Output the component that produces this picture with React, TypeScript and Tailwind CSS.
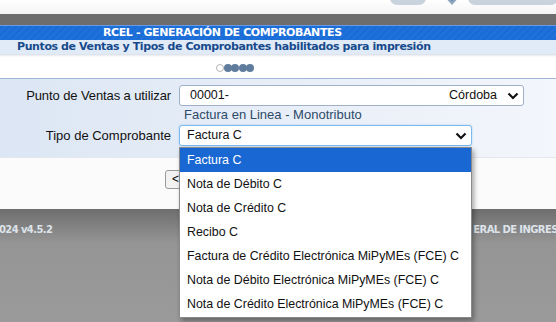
import React from "react"

const opciones = [
  "Factura C",
  "Nota de Débito C",
  "Nota de Crédito C",
  "Recibo C",
  "Factura de Crédito Electrónica MiPyMEs (FCE) C",
  "Nota de Débito Electrónica MiPyMEs (FCE) C",
  "Nota de Crédito Electrónica MiPyMEs (FCE) C",
]

function Chevron() {
  return (
    <svg width="12" height="8" viewBox="0 0 12 8" className="shrink-0">
      <path d="M1.5 1.5 L6 6 L10.5 1.5" fill="none" stroke="#111" strokeWidth="2.2" />
    </svg>
  )
}

export default function App() {
  return (
    <div className="relative w-[556px] h-[322px] overflow-hidden bg-white font-['Liberation_Sans',Arial,sans-serif]">
      {/* top strip with partial logo */}
      <div className="h-[14px] bg-gradient-to-b from-white to-[#f4f4f4] flex justify-end">
        <svg width="170" height="14" viewBox="0 0 170 14">
          <rect x="4" y="-10" width="36" height="15" rx="7" fill="#c9d3dd" />
          <path d="M56 -6 L66 5 L76 -6 Z" fill="#8fa6c0" />
          <path d="M60 -6 L66 1 L72 -6 Z" fill="#3f6896" />
          <rect x="82" y="-10" width="90" height="15" rx="7" fill="#c9d3dd" />
        </svg>
      </div>
      <div className="h-[11px] bg-[#6d6d6d]" />
      {/* title bars */}
      <div className="h-[15px] border-t border-[#6a9ae6] bg-[repeating-linear-gradient(135deg,#1a6cd6_0px,#1a6cd6_3px,#1f72da_3px,#1f72da_5px)] text-white font-bold text-[11px] leading-[14px] font-['DejaVu_Sans',Verdana,sans-serif] pl-[103px] tracking-[-0.4px] whitespace-nowrap">
        RCEL - GENERACIÓN DE COMPROBANTES
      </div>
      <div className="h-[14px] bg-[#e1ebf7] text-[#174a8c] font-bold text-[11px] leading-[14px] font-['DejaVu_Sans',Verdana,sans-serif] pl-[17px] tracking-[-0.4px] whitespace-nowrap">
        Puntos de Ventas y Tipos de Comprobantes habilitados para impresión
      </div>
      <div className="h-[3px] bg-gradient-to-b from-[#d9dee6] to-white" />

      {/* progress dots */}
      <div className="h-[21px] flex items-center pl-[216px]">
        <span className="w-[8px] h-[8px] rounded-full border border-[#b4b4b4] bg-white" />
        {[0, 1, 2, 3].map((i) => (
          <span key={i} className="w-[8px] h-[8px] -ml-[0.5px] rounded-full bg-[#5f7c9c]" />
        ))}
      </div>

      {/* form panel */}
      <div className="h-[79px] border-t border-[#9fb6d6] bg-gradient-to-r from-[#dce6f4] to-[#f3f6fb] text-[13px] text-[#111]">
        <div className="flex items-start pt-[6px]">
          <div className="w-[171px] text-right leading-[21px] tracking-[-0.1px]">Punto de Ventas a utilizar</div>
          <div className="ml-[8px] flex flex-col">
            <div className="w-[345px] h-[21px] bg-white border border-[#9fb0c8] rounded-[3px] flex items-center pl-[10px] pr-[4px] text-[12.5px]">
              <span>00001-</span>
              <span className="flex-1" />
              <span className="mr-[10px]">Córdoba</span>
              <Chevron />
            </div>
            <div className="pl-[5px] leading-[15px] text-[#2e4a69] mt-[1px]">Factura en Linea - Monotributo</div>
          </div>
        </div>
        <div className="flex items-start mt-[3px]">
          <div className="w-[171px] text-right leading-[21px]">Tipo de Comprobante</div>
          <div className="ml-[8px] w-[293px] h-[21px] bg-white border border-[#7db9ee] rounded-[3px] shadow-[0_0_2px_#9ccaf3] flex items-center pl-[7px] pr-[4px] text-[12.5px]">
            <span className="flex-1">Factura C</span>
            <Chevron />
          </div>
        </div>
      </div>

      {/* buttons area */}
      <div className="h-[52px] bg-[#fbfbfb] border-t border-[#e4e8ee] pt-[12px] pl-[165px]">
        <div className="w-[40px] h-[19px] border border-[#9a9a9a] rounded-[3px] bg-[#f2f2f2] text-[12px] leading-[17px] pl-[6px]">&lt;</div>
      </div>

      {/* footer */}
      <div className="h-[113px] bg-gradient-to-b from-[#6e6e6e] via-[#959595] via-[30%] to-[#9a9a9a] flex pt-[13px] text-[10px] font-bold text-[#dde3ea] font-['DejaVu_Sans',Verdana,sans-serif] whitespace-nowrap tracking-[-0.6px]">
        <span className="-ml-[1px]">024 v4.5.2</span>
        <span className="ml-[421px]">ERAL DE INGRESOS</span>
      </div>

      {/* open select list */}
      <div className="absolute left-[179px] top-[147px] w-[293px] bg-white border border-[#8a8a8a] shadow-[2px_3px_5px_rgba(0,0,0,0.35)] text-[12.4px] pb-[1px] whitespace-nowrap">
        {opciones.map((o, i) => (
          <div
            key={o}
            className={`h-[24px] leading-[24px] pl-[7px] ${i === 0 ? "bg-[#1967d2] text-white" : "text-[#111]"}`}
          >
            {o}
          </div>
        ))}
      </div>
    </div>
  )
}
